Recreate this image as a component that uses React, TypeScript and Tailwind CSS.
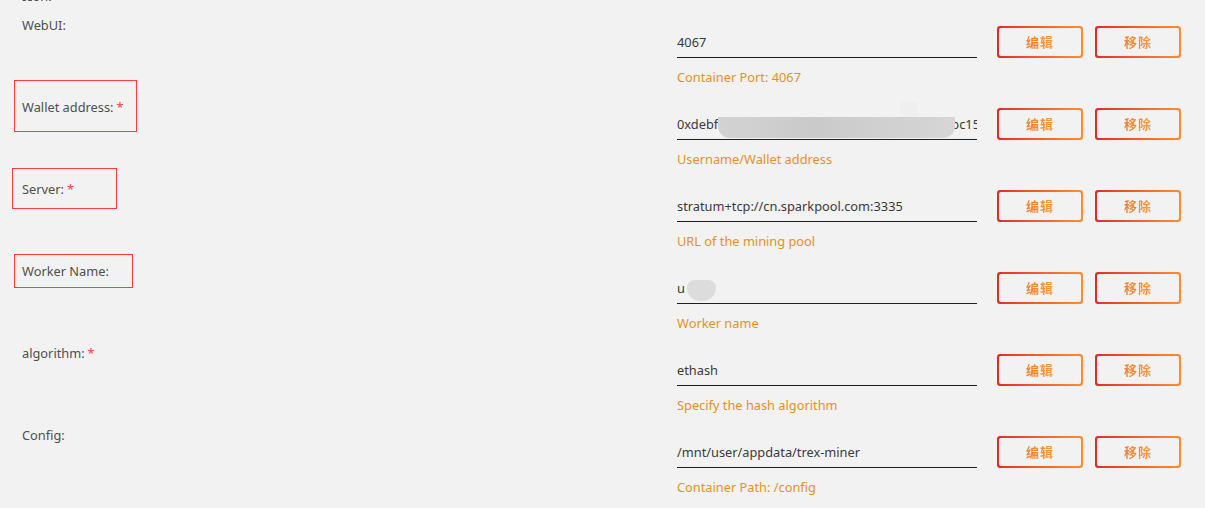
import type { ReactNode } from "react";

interface Field {
  label: string;
  required?: boolean;
  value: ReactNode;
  hint: string;
  box?: string;
}

const fields: Field[] = [
  { label: "WebUI:", value: "4067", hint: "Container Port: 4067" },
  {
    label: "Wallet address:",
    required: true,
    value: (
      <div className="relative flex overflow-hidden whitespace-nowrap">
        <span>0xdebf4</span>
        <span className="flex-1" />
        <span className="-mr-[3px] shrink-0">bc15</span>
      </div>
    ),
    hint: "Username/Wallet address",
    box: "left-[14px] top-[-10px] h-[52px] w-[123px]",
  },
  {
    label: "Server:",
    required: true,
    value: "stratum+tcp://cn.sparkpool.com:3335",
    hint: "URL of the mining pool",
    box: "left-[12px] top-[-4px] h-[41px] w-[105px]",
  },
  {
    label: "Worker Name:",
    value: (
      <div className="relative">
        <span>u</span>
        <div className="absolute left-[10px] top-[0px] h-[21px] w-[29px] rounded-b-[14px] rounded-t-[8px] bg-[#dcdcdc]" />
      </div>
    ),
    hint: "Worker name",
    box: "left-[14px] top-[0px] h-[34px] w-[119px]",
  },
  { label: "algorithm:", required: true, value: "ethash", hint: "Specify the hash algorithm" },
  { label: "Config:", value: "/mnt/user/appdata/trex-miner", hint: "Container Path: /config" },
];

function GradientButton({ children }: { children: ReactNode }) {
  return (
    <button
      type="button"
      className="h-[32px] w-[86px] rounded-[3px] bg-gradient-to-r from-[#e22828] to-[#ff8c2f] p-[2px]"
    >
      <span className="flex h-full w-full items-center justify-center rounded-[2px] bg-[#f2f2f2]">
        <span className="bg-gradient-to-r from-[#f08030] to-[#ff9a3c] bg-clip-text text-[13px] font-bold tracking-[1px] text-transparent [font-family:'Noto_Sans_CJK_SC',sans-serif]">
          {children}
        </span>
      </span>
    </button>
  );
}

export default function App() {
  return (
    <div className="min-h-[508px] w-[1205px] overflow-hidden bg-[#f2f2f2] text-[12.8px] [font-family:'Noto_Sans','Noto_Sans_CJK_SC',sans-serif]">
      <div className="flex h-[4px] items-end overflow-hidden pl-[22px]">
        <span className="shrink-0 leading-[16px] text-[#4f4f4f]">Icon:</span>
      </div>
      <div className="h-[4px]" />
      {fields.map((field) => (
        <div key={field.label} className="flex h-[82px]">
          <div className="relative w-[677px] pl-[22px] pt-[9px] leading-[16px] text-[#4f4f4f]">
            {field.label}
            {field.required ? <span className="ml-[3px] text-[#ff3c3c]">*</span> : null}
            {field.box ? (
              <div className={`absolute border border-[#ff3b3b] ${field.box}`} />
            ) : null}
          </div>
          <div className="relative w-[300px]">
            <div className="mt-[26px] border-b border-[#1f1f1f] pb-[7px] leading-[16px] text-[#3a3a3a]">
              {field.value}
            </div>
            <div className="mt-[11px] leading-[16px] text-[#e8911a]">{field.hint}</div>
            {field.label === "Wallet address:" ? (
              <>
                <div className="absolute left-[223px] top-[12px] h-[16px] w-[18px] bg-[#efefef]" />
                <div className="absolute left-[41px] top-[27px] h-[21px] w-[237px] rounded-b-[12px] bg-[linear-gradient(90deg,#d3d3d3,#cacaca_40%,#d0d0d0_70%,#d6d6d6)]" />
              </>
            ) : null}
          </div>
          <div className="ml-[20px] mt-[18px] flex gap-[12px] self-start">
            <GradientButton>编辑</GradientButton>
            <GradientButton>移除</GradientButton>
          </div>
        </div>
      ))}
    </div>
  );
}
